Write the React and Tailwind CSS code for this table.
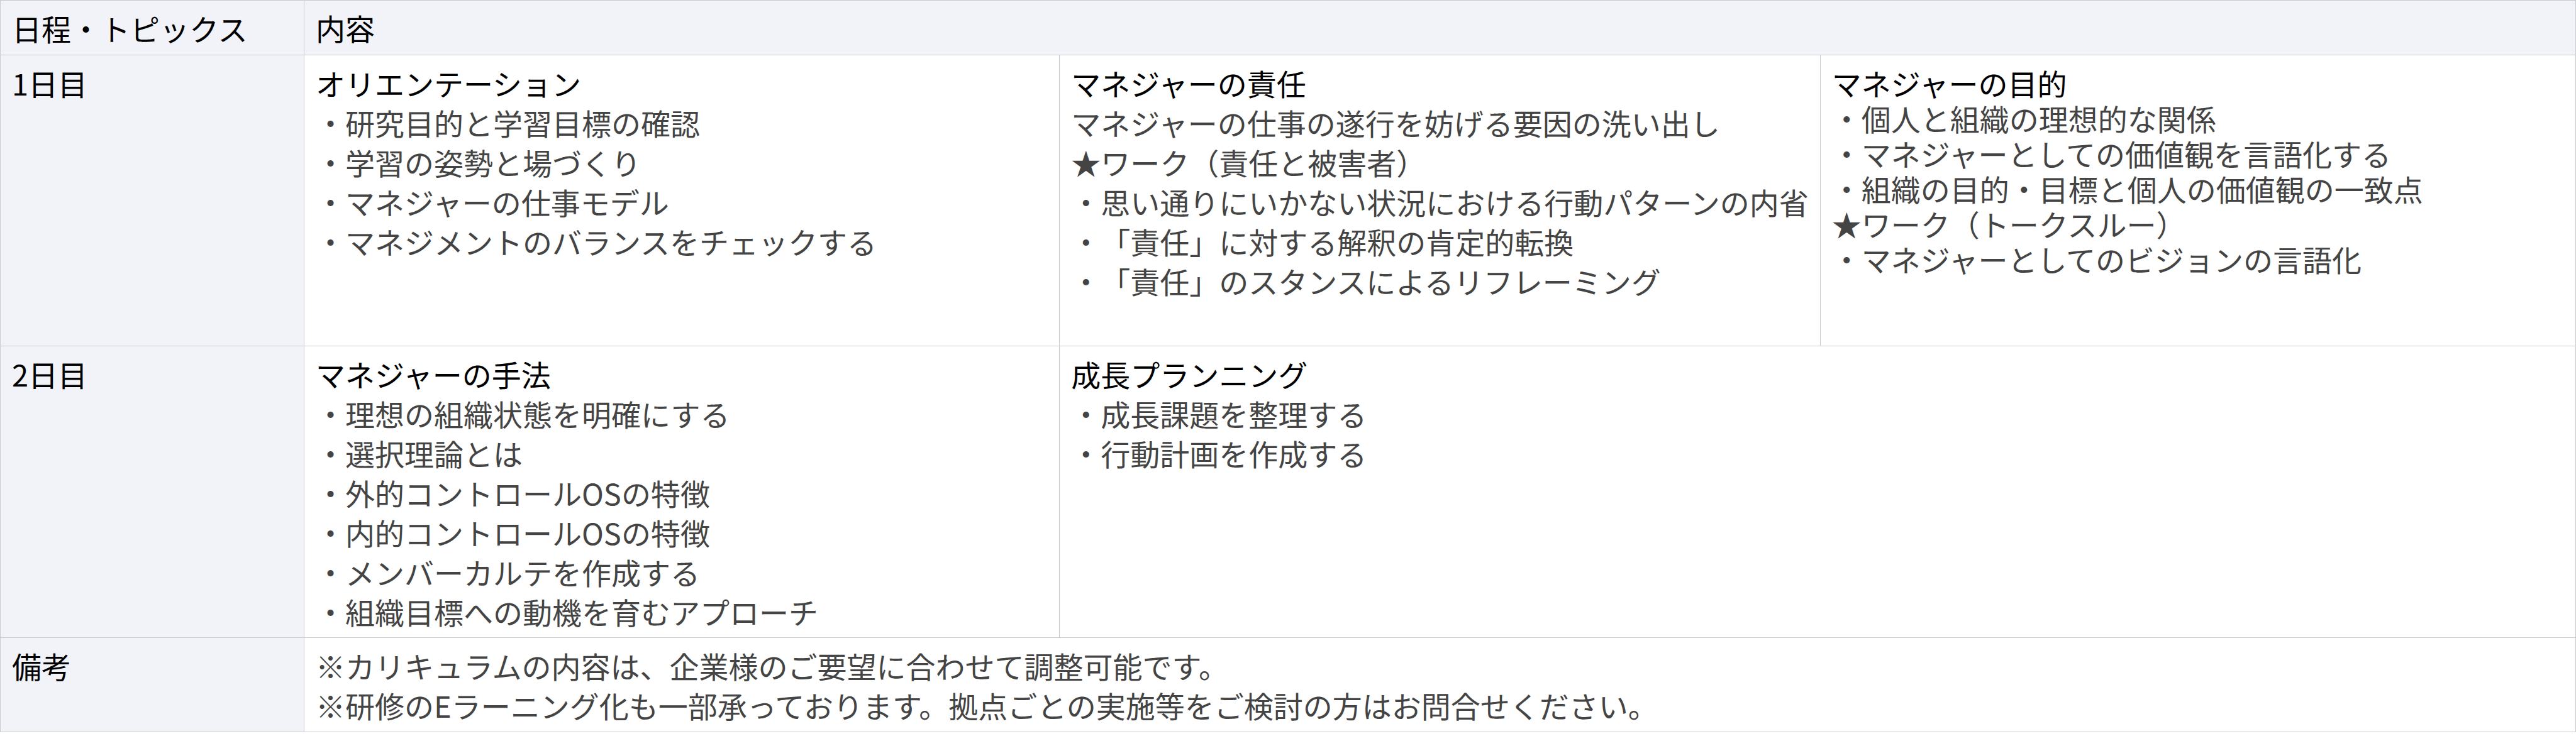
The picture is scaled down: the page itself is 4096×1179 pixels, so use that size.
const day1 = [
  {
    title: "オリエンテーション",
    lines: [
      "・研究目的と学習目標の確認",
      "・学習の姿勢と場づくり",
      "・マネジャーの仕事モデル",
      "・マネジメントのバランスをチェックする",
    ],
  },
  {
    title: "マネジャーの責任",
    lines: [
      "マネジャーの仕事の遂行を妨げる要因の洗い出し",
      "★ワーク（責任と被害者）",
      "・思い通りにいかない状況における行動パターンの内省",
      "・「責任」に対する解釈の肯定的転換",
      "・「責任」のスタンスによるリフレーミング",
    ],
  },
  {
    title: "マネジャーの目的",
    lines: [
      "・個人と組織の理想的な関係",
      "・マネジャーとしての価値観を言語化する",
      "・組織の目的・目標と個人の価値観の一致点",
      "★ワーク（トークスルー）",
      "・マネジャーとしてのビジョンの言語化",
    ],
    tight: true,
  },
];

const day2 = [
  {
    title: "マネジャーの手法",
    lines: [
      "・理想の組織状態を明確にする",
      "・選択理論とは",
      "・外的コントロールOSの特徴",
      "・内的コントロールOSの特徴",
      "・メンバーカルテを作成する",
      "・組織目標への動機を育むアプローチ",
    ],
  },
  {
    title: "成長プランニング",
    lines: ["・成長課題を整理する", "・行動計画を作成する"],
    wide: true,
  },
];

const notes = [
  "※カリキュラムの内容は、企業様のご要望に合わせて調整可能です。",
  "※研修のEラーニング化も一部承っております。拠点ごとの実施等をご検討の方はお問合せください。",
];

const Topic = ({ topic }) => (
  <div
    className={`border-r border-b border-[#c9cacd] bg-white px-[18px] ${
      topic.tight ? "pt-[16px] leading-[56px]" : "pt-[12px] leading-[63px]"
    } ${topic.wide ? "col-span-2" : ""}`}
  >
    <div className="whitespace-nowrap text-black">{topic.title}</div>
    {topic.lines.map((l) => (
      <div key={l} className="whitespace-nowrap text-[#444444]">
        {l}
      </div>
    ))}
  </div>
);

const Label = ({ children, center }) => (
  <div
    className={`border-r border-b border-[#c9cacd] bg-[#f1f3f8] px-[18px] leading-[63px] text-black ${
      center ? "flex items-center" : "pt-[12px]"
    }`}
  >
    {children}
  </div>
);

export default function App() {
  return (
    <div
      className="min-h-screen bg-white text-[47px] [text-spacing-trim:space-all]"
      style={{ fontFamily: '"Noto Sans CJK JP", "Noto Sans", sans-serif' }}
    >
      <div className="grid grid-cols-[483px_1fr_1fr_1fr] grid-rows-[87px_463px_464px_150px] border-t border-l border-[#c9cacd]">
        {/* header */}
        <Label center>日程・トピックス</Label>
        <div className="col-span-3 flex items-center border-r border-b border-[#c9cacd] bg-[#f1f3f8] px-[18px] text-black">
          内容
        </div>

        {/* 1日目 */}
        <Label>1日目</Label>
        {day1.map((t) => (
          <Topic key={t.title} topic={t} />
        ))}

        {/* 2日目 */}
        <Label>2日目</Label>
        {day2.map((t) => (
          <Topic key={t.title} topic={t} />
        ))}

        {/* 備考 */}
        <Label>備考</Label>
        <div className="col-span-3 border-r border-b border-[#c9cacd] bg-white px-[18px] pt-[12px] leading-[63px] text-[#444444]">
          {notes.map((n) => (
            <div key={n} className="whitespace-nowrap">
              {n}
            </div>
          ))}
        </div>
      </div>
    </div>
  );
}
